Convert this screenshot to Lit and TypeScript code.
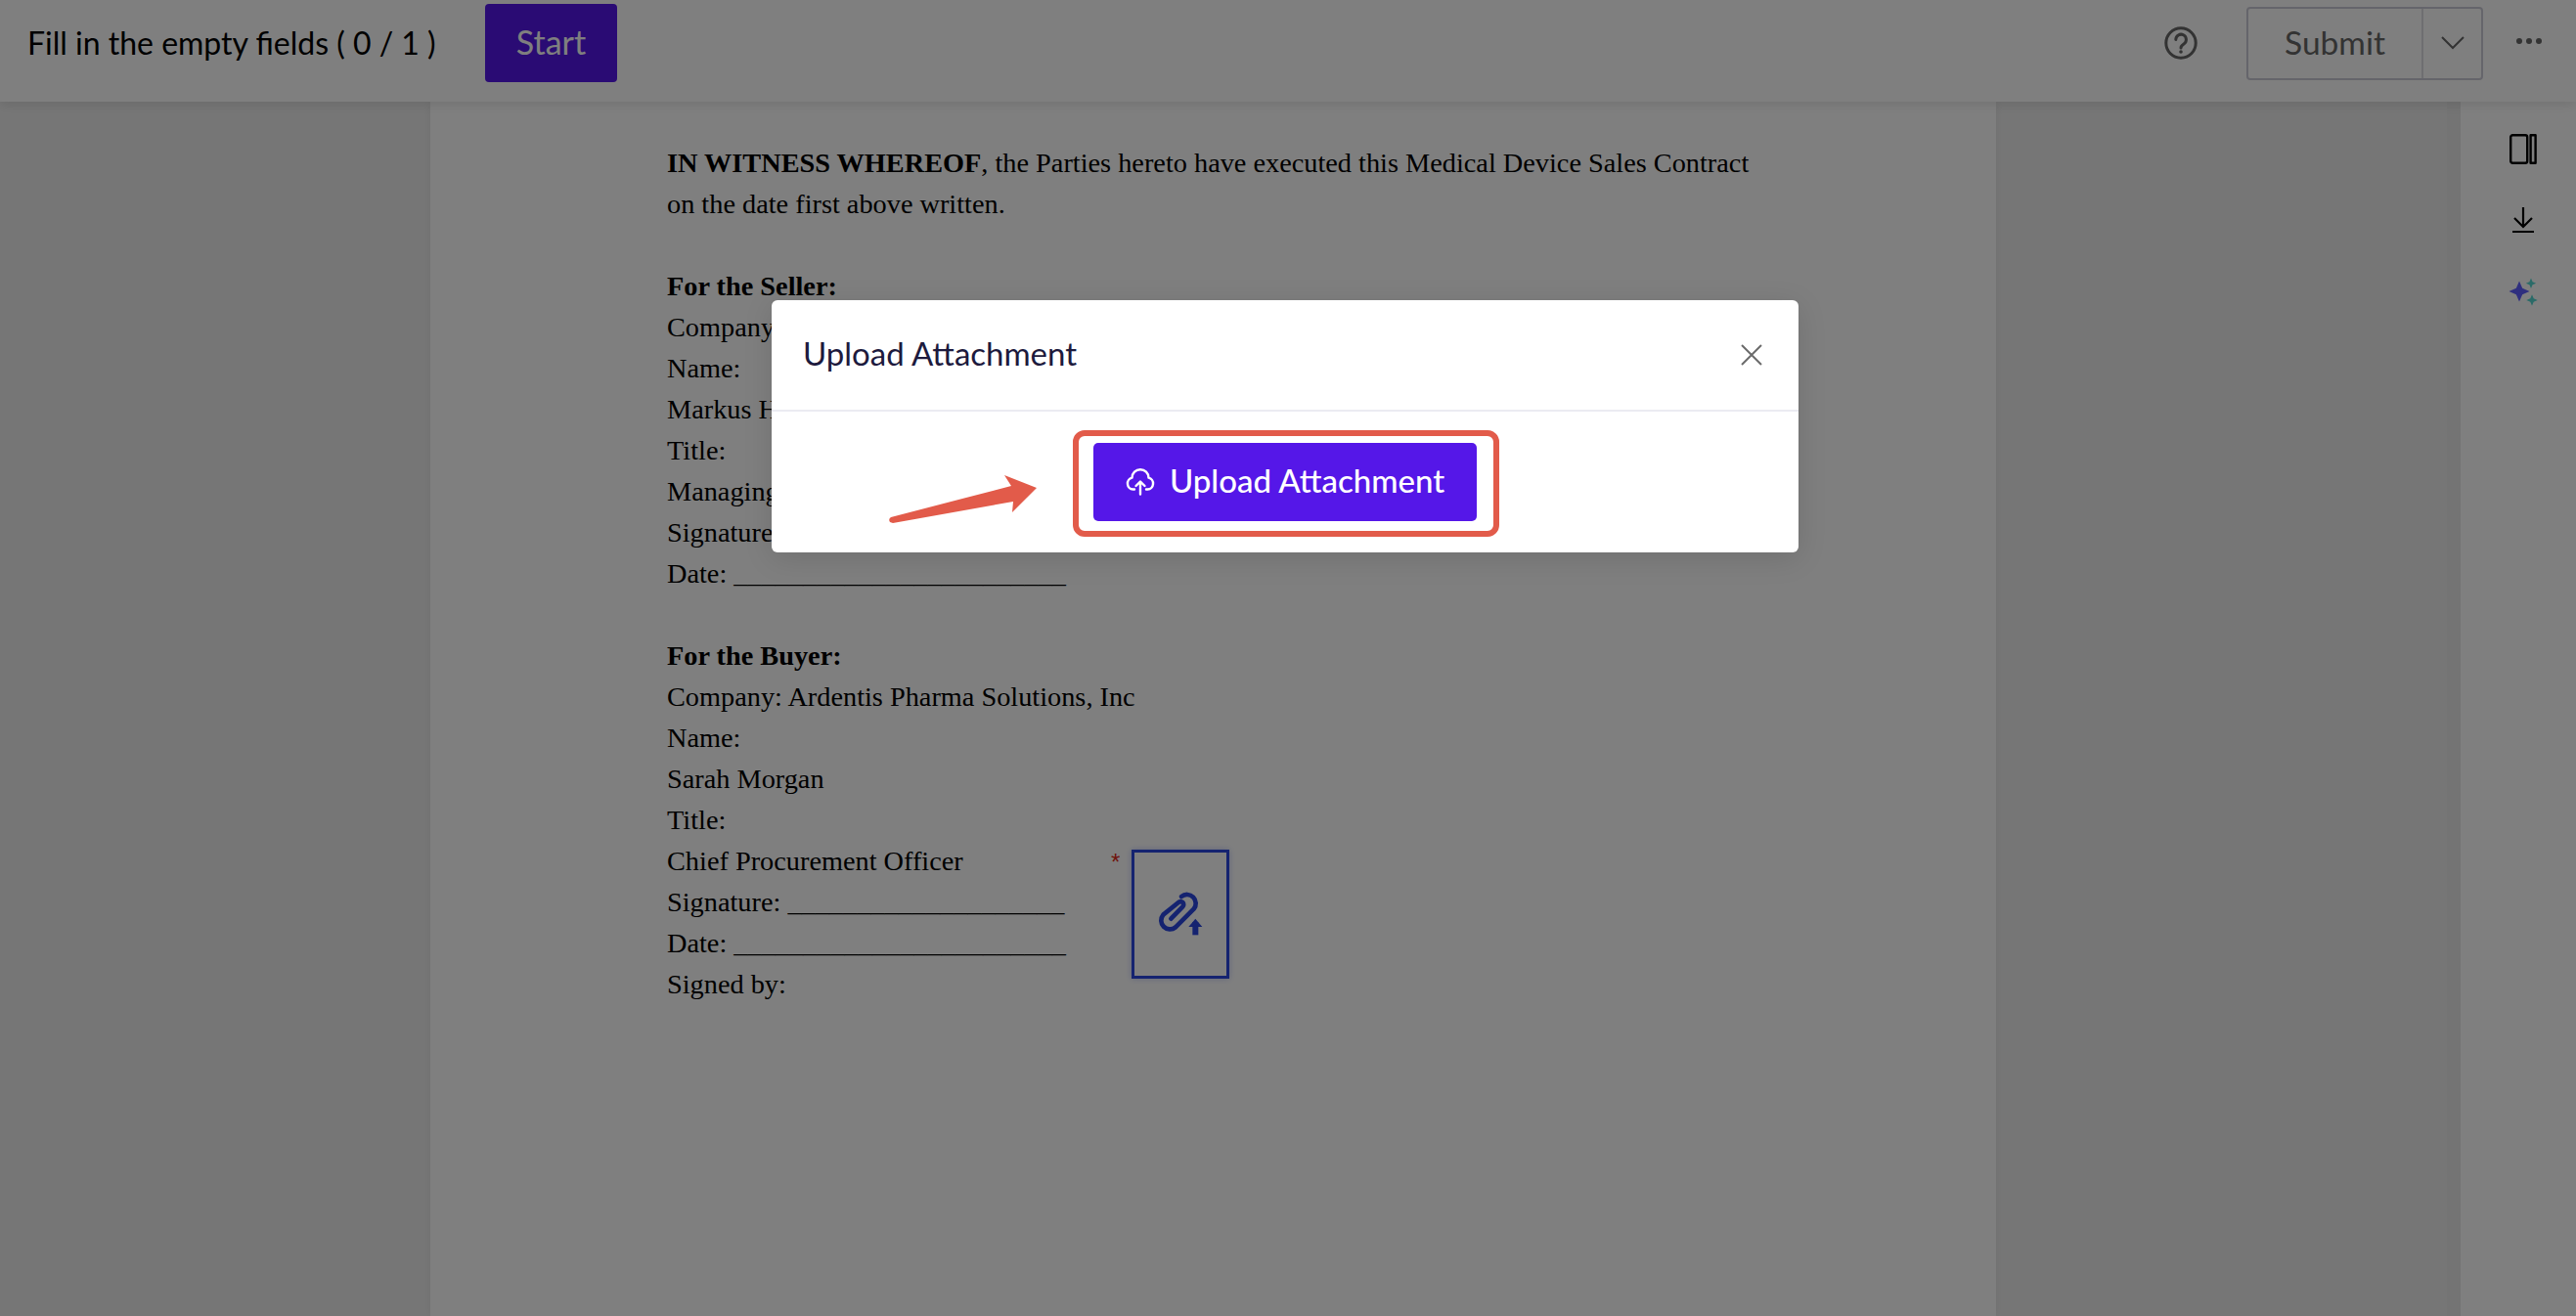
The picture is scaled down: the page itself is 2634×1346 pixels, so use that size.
import { LitElement, html, css } from "lit";
import { customElement } from "lit/decorators.js";

const US = (n: number) => "_".repeat(n);

/** Four-pointed star outline, used for the sparkle icon. */
const star = (cx: number, cy: number, r: number) => {
  const k = r * 0.3;
  return `M${cx} ${cy - r}L${cx + k} ${cy - k}L${cx + r} ${cy}L${cx + k} ${cy + k}L${cx} ${cy + r}L${cx - k} ${cy + k}L${cx - r} ${cy}L${cx - k} ${cy - k}Z`;
};

@customElement("app-root")
export class AppRoot extends LitElement {
  static styles = css`
    :host { display: block; position: relative; width: 100%; height: 100vh; overflow: hidden; background: #ededed; font-family: "Lato", "Open Sans", sans-serif; }
    .shell { display: grid; grid-template-rows: 104px 1fr; height: 100%; }
    .toolbar { display: flex; align-items: center; background: #fff; padding: 0 35px 16px 28px; box-shadow: 0 2px 12px rgba(0,0,0,.12); position: relative; z-index: 2; }
    .fill { font-size: 32px; color: #000; width: 468px; flex: none; white-space: nowrap; margin-top: -2px; }
    .start { width: 135px; height: 80px; background: #5517e8; color: #fff; border-radius: 4px; display: flex; align-items: center; justify-content: center; font-size: 34px; padding-bottom: 3px; box-sizing: border-box; }
    .spacer { flex: 1; }
    .help { display: block; margin-right: 50px; }
    .submit { display: flex; width: 242px; height: 75px; box-sizing: border-box; border: 2px solid #cbcbd6; border-radius: 4px; color: #666; margin-right: 34px; }
    .submit-label { width: 179px; flex: none; display: flex; align-items: center; justify-content: center; font-size: 33.5px; border-right: 2px solid #dcdce2; box-sizing: border-box; padding-bottom: 3px; }
    .submit-caret { flex: 1; display: flex; align-items: center; justify-content: center; }
    .dots { display: flex; gap: 4px; margin-top: -4px; }
    .dots i { display: block; width: 6px; height: 6px; border-radius: 50%; background: #666; }
    .content { display: flex; min-height: 0; }
    .main { flex: 1; padding-left: 440px; overflow: hidden; }
    .doc { position: relative; width: 1601px; height: 100%; box-sizing: border-box; background: #fff; padding: 42px 0 0 242px; font-family: "Liberation Serif", serif; font-size: 28.3px; line-height: 42px; color: #000; box-shadow: 0 0 8px rgba(0,0,0,.06); }
    .line { min-height: 42px; white-space: nowrap; }
    .field { position: absolute; left: 717px; top: 765px; width: 100px; height: 132px; box-sizing: border-box; border: 3px solid #2a47e0; display: flex; align-items: center; justify-content: center; box-shadow: 0 0 6px rgba(42,71,224,.3); }
    .star { position: absolute; left: -24px; top: -2px; font-size: 24px; line-height: 24px; color: #e02a1a; font-family: "Liberation Sans", sans-serif; }
    .band { width: 14px; background: #e8e8e8; flex: none; }
    .side { width: 118px; flex: none; background: #fff; display: flex; flex-direction: column; align-items: center; padding: 33px 0 0 10px; box-sizing: border-box; }
    .side svg { display: block; }
    .dl { margin-top: 44px; }
    .spark { margin-top: 46px; }
    .overlay { position: absolute; inset: 0; z-index: 10; background: rgba(0,0,0,.5); display: flex; justify-content: center; align-items: flex-start; padding: 307px 6px 0 0; box-sizing: border-box; }
    .modal { position: relative; width: 1050px; background: #fff; border-radius: 6px; box-shadow: 0 6px 30px rgba(0,0,0,.12); }
    .head { height: 112px; display: flex; align-items: center; justify-content: space-between; padding: 0 37px 0 32px; border-bottom: 2px solid #ebebf2; }
    .title { font-size: 33px; color: #1d1a3d; margin-top: -5px; }
    .close { display: block; }
    .body { display: flex; justify-content: center; padding: 32px 0; }
    .upload { width: 392px; height: 80px; border-radius: 5px; background: #5517e8; color: #fff; display: flex; align-items: center; justify-content: center; gap: 15px; font-size: 33px; font-weight: 500; }
    .upload span { margin-top: -4px; }
    .ring { position: absolute; left: 308px; top: 133px; width: 436px; height: 109px; box-sizing: border-box; border: 6px solid #e25b4a; border-radius: 12px; }
    .arrow { position: absolute; left: 111px; top: 171px; }
  `;

  render() {
    return html`
      <div class="shell">
        <div class="toolbar">
          <div class="fill">Fill in the empty fields ( 0 / 1 )</div>
          <div class="start">Start</div>
          <div class="spacer"></div>
          <svg class="help" width="34" height="34" viewBox="0 0 34 34" fill="none" stroke="#666" stroke-width="3">
            <circle cx="17" cy="17" r="15.2"></circle>
            <path d="M11.8 13.5a5.3 5.3 0 1 1 8.2 4.4c-2 1.3-3 2.2-3 4" stroke-linecap="round"></path>
            <circle cx="17" cy="26" r="1.8" fill="#666" stroke="none"></circle>
          </svg>
          <div class="submit">
            <div class="submit-label">Submit</div>
            <div class="submit-caret">
              <svg width="24" height="14" viewBox="0 0 24 14" fill="none" stroke="#666" stroke-width="2"><path d="M1 1l11 11L23 1"></path></svg>
            </div>
          </div>
          <div class="dots"><i></i><i></i><i></i></div>
        </div>
        <div class="content">
          <div class="main">
            <div class="doc">
              <div class="line"><b>IN WITNESS WHEREOF</b>, the Parties hereto have executed this Medical Device Sales Contract</div>
              <div class="line">on the date first above written.</div>
              <div class="line"></div>
              <div class="line"><b>For the Seller:</b></div>
              <div class="line">Company: Helix Medical Devices GmbH</div>
              <div class="line">Name:</div>
              <div class="line">Markus Hoffmann</div>
              <div class="line">Title:</div>
              <div class="line">Managing Director</div>
              <div class="line">Signature: ${US(20)}</div>
              <div class="line">Date: ${US(24)}</div>
              <div class="line"></div>
              <div class="line"><b>For the Buyer:</b></div>
              <div class="line">Company: Ardentis Pharma Solutions, Inc</div>
              <div class="line">Name:</div>
              <div class="line">Sarah Morgan</div>
              <div class="line">Title:</div>
              <div class="line">Chief Procurement Officer</div>
              <div class="line">Signature: ${US(20)}</div>
              <div class="line">Date: ${US(24)}</div>
              <div class="line">Signed by:</div>
              <div class="field">
                <span class="star">*</span>
                <svg width="60" height="60" viewBox="261 168 180 180" fill="none" stroke="#2a47e0" stroke-width="14" stroke-linecap="round" stroke-linejoin="round">
                  <path d="M354 204A27 27 0 0 1 392 242L336 298A27 27 0 0 1 298 260L345 222A9 9 0 0 1 358 235L322 272"></path>
                  <path d="M397 322V282" stroke-linecap="butt" stroke-width="18"></path>
                  <path d="M376 297L397 272L418 297Z" fill="#2a47e0" stroke="none"></path>
                </svg>
              </div>
            </div>
          </div>
          <div class="band"></div>
          <div class="side">
            <svg width="28" height="31" viewBox="0 0 28 31" fill="none" stroke="#000" stroke-width="2.4" stroke-linejoin="round"><rect x="1.2" y="1.2" width="17" height="28.6" rx="2"></rect><rect x="21.6" y="1.2" width="5" height="28.6"></rect></svg>
            <svg class="dl" width="24" height="26" viewBox="0 0 24 26" fill="none" stroke="#000" stroke-width="2.2"><path d="M12 0v20M3 11l9 9 9-9M1 25h22"></path></svg>
            <svg class="spark" width="30" height="30" viewBox="0 0 30 30">
              <path d="${star(11, 14, 10.5)}" fill="#5e5eff"></path>
              <path d="${star(23, 5.7, 5.2)}" fill="#54d6d0"></path>
              <path d="${star(24, 23, 5.7)}" fill="#54d6d0"></path>
            </svg>
          </div>
        </div>
      </div>
      <div class="overlay">
        <div class="modal">
          <div class="head">
            <div class="title">Upload Attachment</div>
            <svg class="close" width="22" height="22" viewBox="0 0 22 22" fill="none" stroke="#6b6b6b" stroke-width="2"><path d="M1 1l20 20M21 1L1 21"></path></svg>
          </div>
          <div class="body">
            <div class="upload">
              <svg width="30" height="28" viewBox="0 0 30 28" fill="none" stroke="#fff" stroke-width="2.4" stroke-linecap="round" stroke-linejoin="round"><path d="M9 21.500H7.500a6 6 0 0 1-1-11.800A8.500 8.500 0 0 1 23.500 9.700a6 6 0 0 1-1 11.800H21"></path><path d="M15 26.500V14M10.500 18L15 13.500 19.500 18"></path></svg>
              <span>Upload Attachment</span>
            </div>
          </div>
          <div class="ring"></div>
          <svg class="arrow" width="162" height="60" viewBox="0 0 162 60"><path d="M10 56Q8 53 11 51L134 19 127 8 160 21 135 46 136 35 13 57Z" fill="#e25b4a"></path></svg>
        </div>
      </div>
    `;
  }
}
